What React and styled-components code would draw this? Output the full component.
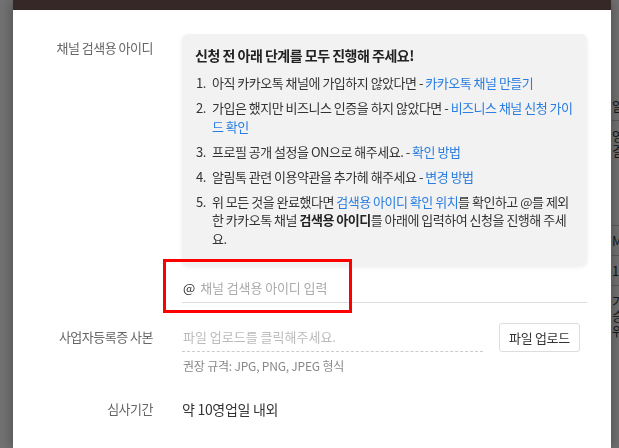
import React from 'react'
import styled, { createGlobalStyle } from 'styled-components'

const GlobalStyle = createGlobalStyle`
  html, body { margin: 0; padding: 0; }
  body {
    font-family: "Noto Sans CJK KR", "Noto Sans", sans-serif;
    background: #fff;
    overflow: hidden;
  }
`

function App() {
    return (
        <>
            <GlobalStyle />
            <BgPage>
                <BgRow>알림톡</BgRow>
                <BgDivider />
                <BgRow>영업</BgRow>
                <BgRow>결과</BgRow>
                <BgSpacer />
                <BgDivider />
                <BgRow>MSG</BgRow>
                <BgDivider />
                <BgRow>1</BgRow>
                <BgDivider />
                <BgRow>기간</BgRow>
                <BgRow>승인</BgRow>
                <BgRow>위치</BgRow>
            </BgPage>
            <Dim />
            <Modal>
                <ModalHead />
                <ModalBody>
                    <FormRow>
                        <Label $top={5}>채널 검색용 아이디</Label>
                        <Field>
                            <GuideBox>
                                <GuideTitle>신청 전 아래 단계를 모두 진행해 주세요!</GuideTitle>
                                <Steps>
                                    <Step>
                                        <Num>1.</Num>
                                        <span>아직 카카오톡 채널에 가입하지 않았다면 - <Link>카카오톡 채널 만들기</Link></span>
                                    </Step>
                                    <Step>
                                        <Num>2.</Num>
                                        <span>가입은 했지만 비즈니스 인증을 하지 않았다면 - <Link>비즈니스 채널 신청 가이드 확인</Link></span>
                                    </Step>
                                    <Step>
                                        <Num>3.</Num>
                                        <span>프로필 공개 설정을 ON으로 해주세요. - <Link>확인 방법</Link></span>
                                    </Step>
                                    <Step>
                                        <Num>4.</Num>
                                        <span>알림톡 관련 이용약관을 추가헤 해주세요 - <Link>변경 방법</Link></span>
                                    </Step>
                                    <Step>
                                        <Num>5.</Num>
                                        <span>위 모든 것을 완료했다면 <Link>검색용 아이디 확인 위치</Link>를 확인하고 @를 제외한 카카오톡 채널 <b>검색용 아이디</b>를 아래에 입력하여 신청을 진행해 주세요.</span>
                                    </Step>
                                </Steps>
                            </GuideBox>
                            <IdInput>
                                <At>@</At>
                                <Placeholder>채널 검색용 아이디 입력</Placeholder>
                                <Highlight />
                            </IdInput>
                        </Field>
                    </FormRow>

                    <FormRow $gap={20}>
                        <Label $top={5}>사업자등록증 사본</Label>
                        <Field>
                            <UploadLine>
                                <FileBox>파일 업로드를 클릭해주세요.</FileBox>
                                <UploadButton>파일 업로드</UploadButton>
                            </UploadLine>
                            <Hint>권장 규격: JPG, PNG, JPEG 형식</Hint>
                        </Field>
                    </FormRow>

                    <FormRow $gap={26}>
                        <Label>심사기간</Label>
                        <Value>약 10영업일 내외</Value>
                    </FormRow>
                </ModalBody>
            </Modal>
        </>
    )
}

export default App

const BgPage = styled.div`
    height: 448px;
    padding: 98px 0 0 612px;
    box-sizing: border-box;
    font-size: 13px;
    color: #333;
    white-space: nowrap;
    overflow: hidden;
`
const BgRow = styled.div`
    line-height: 15px;
`
const BgDivider = styled.div`
    border-top: 1px solid #ccc;
    margin: 7px 0;
`
const BgSpacer = styled.div`
    height: 60px;
`
const Dim = styled.div`
    position: fixed;
    inset: 0;
    background: rgba(0, 0, 0, 0.56);
`
const Modal = styled.div`
    position: fixed;
    top: 0;
    left: 13px;
    width: 598px;
    height: 448px;
    background: #fff;
    box-shadow: 0 0 12px rgba(0, 0, 0, 0.35);
    overflow: hidden;
`
const ModalHead = styled.div`
    height: 10px;
    background: #372828;
`
const ModalBody = styled.div`
    padding: 24px 24px 0 13px;
`
const FormRow = styled.div`
    display: grid;
    grid-template-columns: 127px 1fr;
    column-gap: 29px;
    align-items: start;
    margin-top: ${p => p.$gap || 0}px;
`
const Label = styled.div`
    text-align: right;
    font-size: 13px;
    letter-spacing: -0.5px;
    color: #666;
    line-height: 18px;
    padding-top: ${p => p.$top || 0}px;
`
const Field = styled.div`
    min-width: 0;
`
const GuideBox = styled.div`
    background: #f2f2f2;
    border-radius: 6px;
    padding: 11px 13px 17px 13px;
    box-shadow: 0 2px 4px rgba(0, 0, 0, 0.08);
`
const GuideTitle = styled.div`
    font-size: 14px;
    font-weight: 700;
    color: #222;
    line-height: 20px;
    letter-spacing: -0.5px;
`
const Steps = styled.ol`
    list-style: none;
    margin: 9px 0 0;
    padding: 0;
`
const Step = styled.li`
    display: flex;
    font-size: 13px;
    line-height: 18.5px;
    color: #333;
    letter-spacing: -0.5px;
    & + & { margin-top: 6.5px; }
    b { font-weight: 700; color: #222; }
`
const Num = styled.span`
    flex: none;
    width: 16px;
    padding-left: 1px;
`
const Link = styled.a`
    color: #2a7de1;
    cursor: pointer;
`
const IdInput = styled.div`
    position: relative;
    display: flex;
    align-items: center;
    gap: 5px;
    height: 30px;
    margin-top: 7px;
    padding-left: 1px;
    border-bottom: 1px solid #ddd;
    font-size: 13px;
    letter-spacing: -0.1px;
`
const At = styled.span`
    color: #333;
`
const Placeholder = styled.span`
    color: #aaa;
`
const Highlight = styled.div`
    position: absolute;
    left: -19px;
    top: -13px;
    width: 189px;
    height: 54px;
    box-sizing: border-box;
    border: 3px solid #ff0000;
    pointer-events: none;
`
const UploadLine = styled.div`
    display: flex;
    align-items: center;
    gap: 16px;
    padding-right: 7px;
`
const FileBox = styled.div`
    flex: 1;
    height: 28px;
    line-height: 28px;
    border-bottom: 1px dashed #ccc;
    font-size: 13px;
    color: #bbb;
    padding-left: 1px;
`
const UploadButton = styled.button`
    width: 81px;
    height: 29px;
    border: 1px solid #ddd;
    border-radius: 3px;
    background: #fff;
    font-family: inherit;
    font-size: 13px;
    letter-spacing: -0.3px;
    color: #333;
    padding: 0;
`
const Hint = styled.div`
    font-size: 12px;
    letter-spacing: -0.2px;
    color: #888;
    margin-top: 5px;
    padding-left: 1px;
`
const Value = styled.div`
    font-size: 14px;
    letter-spacing: -0.3px;
    line-height: 18px;
    color: #333;
`
